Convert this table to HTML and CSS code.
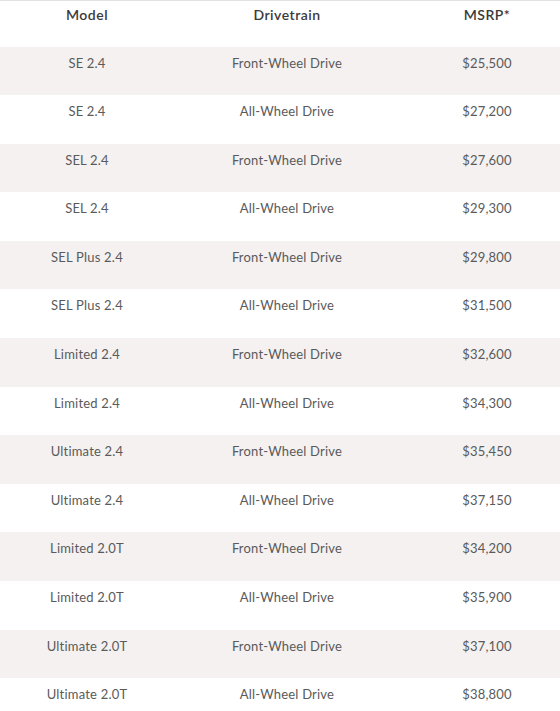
FILE: index.html
```html
<!DOCTYPE html>
<html>
<head>
<meta charset="utf-8">
<link rel="stylesheet" href="styles.css">
</head>
<body>
<table class="price-table">
  <thead>
    <tr><th>Model</th><th>Drivetrain</th><th>MSRP*</th></tr>
  </thead>
  <tbody>
    <tr><td>SE 2.4</td><td>Front-Wheel Drive</td><td>$25,500</td></tr>
    <tr><td>SE 2.4</td><td>All-Wheel Drive</td><td>$27,200</td></tr>
    <tr><td>SEL 2.4</td><td>Front-Wheel Drive</td><td>$27,600</td></tr>
    <tr><td>SEL 2.4</td><td>All-Wheel Drive</td><td>$29,300</td></tr>
    <tr><td>SEL Plus 2.4</td><td>Front-Wheel Drive</td><td>$29,800</td></tr>
    <tr><td>SEL Plus 2.4</td><td>All-Wheel Drive</td><td>$31,500</td></tr>
    <tr><td>Limited 2.4</td><td>Front-Wheel Drive</td><td>$32,600</td></tr>
    <tr><td>Limited 2.4</td><td>All-Wheel Drive</td><td>$34,300</td></tr>
    <tr><td>Ultimate 2.4</td><td>Front-Wheel Drive</td><td>$35,450</td></tr>
    <tr><td>Ultimate 2.4</td><td>All-Wheel Drive</td><td>$37,150</td></tr>
    <tr><td>Limited 2.0T</td><td>Front-Wheel Drive</td><td>$34,200</td></tr>
    <tr><td>Limited 2.0T</td><td>All-Wheel Drive</td><td>$35,900</td></tr>
    <tr><td>Ultimate 2.0T</td><td>Front-Wheel Drive</td><td>$37,100</td></tr>
    <tr><td>Ultimate 2.0T</td><td>All-Wheel Drive</td><td>$38,800</td></tr>
  </tbody>
</table>
</body>
</html>
```
FILE: styles.css
```css
html, body {
  margin: 0;
  padding: 0;
  background: #ffffff;
  overflow: hidden;
}
.price-table {
  border-collapse: collapse;
  table-layout: fixed;
  width: 600px;
  margin-left: -13px;
  border-top: 1px solid #e2e2e2;
  font-family: Lato, "Liberation Sans", sans-serif;
  font-size: 13px;
  color: #5a5a5a;
}
.price-table th,
.price-table td {
  width: 200px;
  text-align: center;
  padding: 0;
  line-height: 16px;
  vertical-align: top;
}
.price-table th {
  height: 46px;
  padding-top: 6px;
  box-sizing: border-box;
  font-size: 14px;
  letter-spacing: 0.5px;
  font-weight: 600;
  color: #3a3a3a;
}
.price-table td {
  height: 48.6px;
  padding-top: 8px;
  box-sizing: border-box;
  letter-spacing: 0.2px;
}
.price-table tbody tr:nth-child(odd) {
  background: #f4f1f0;
}
```
